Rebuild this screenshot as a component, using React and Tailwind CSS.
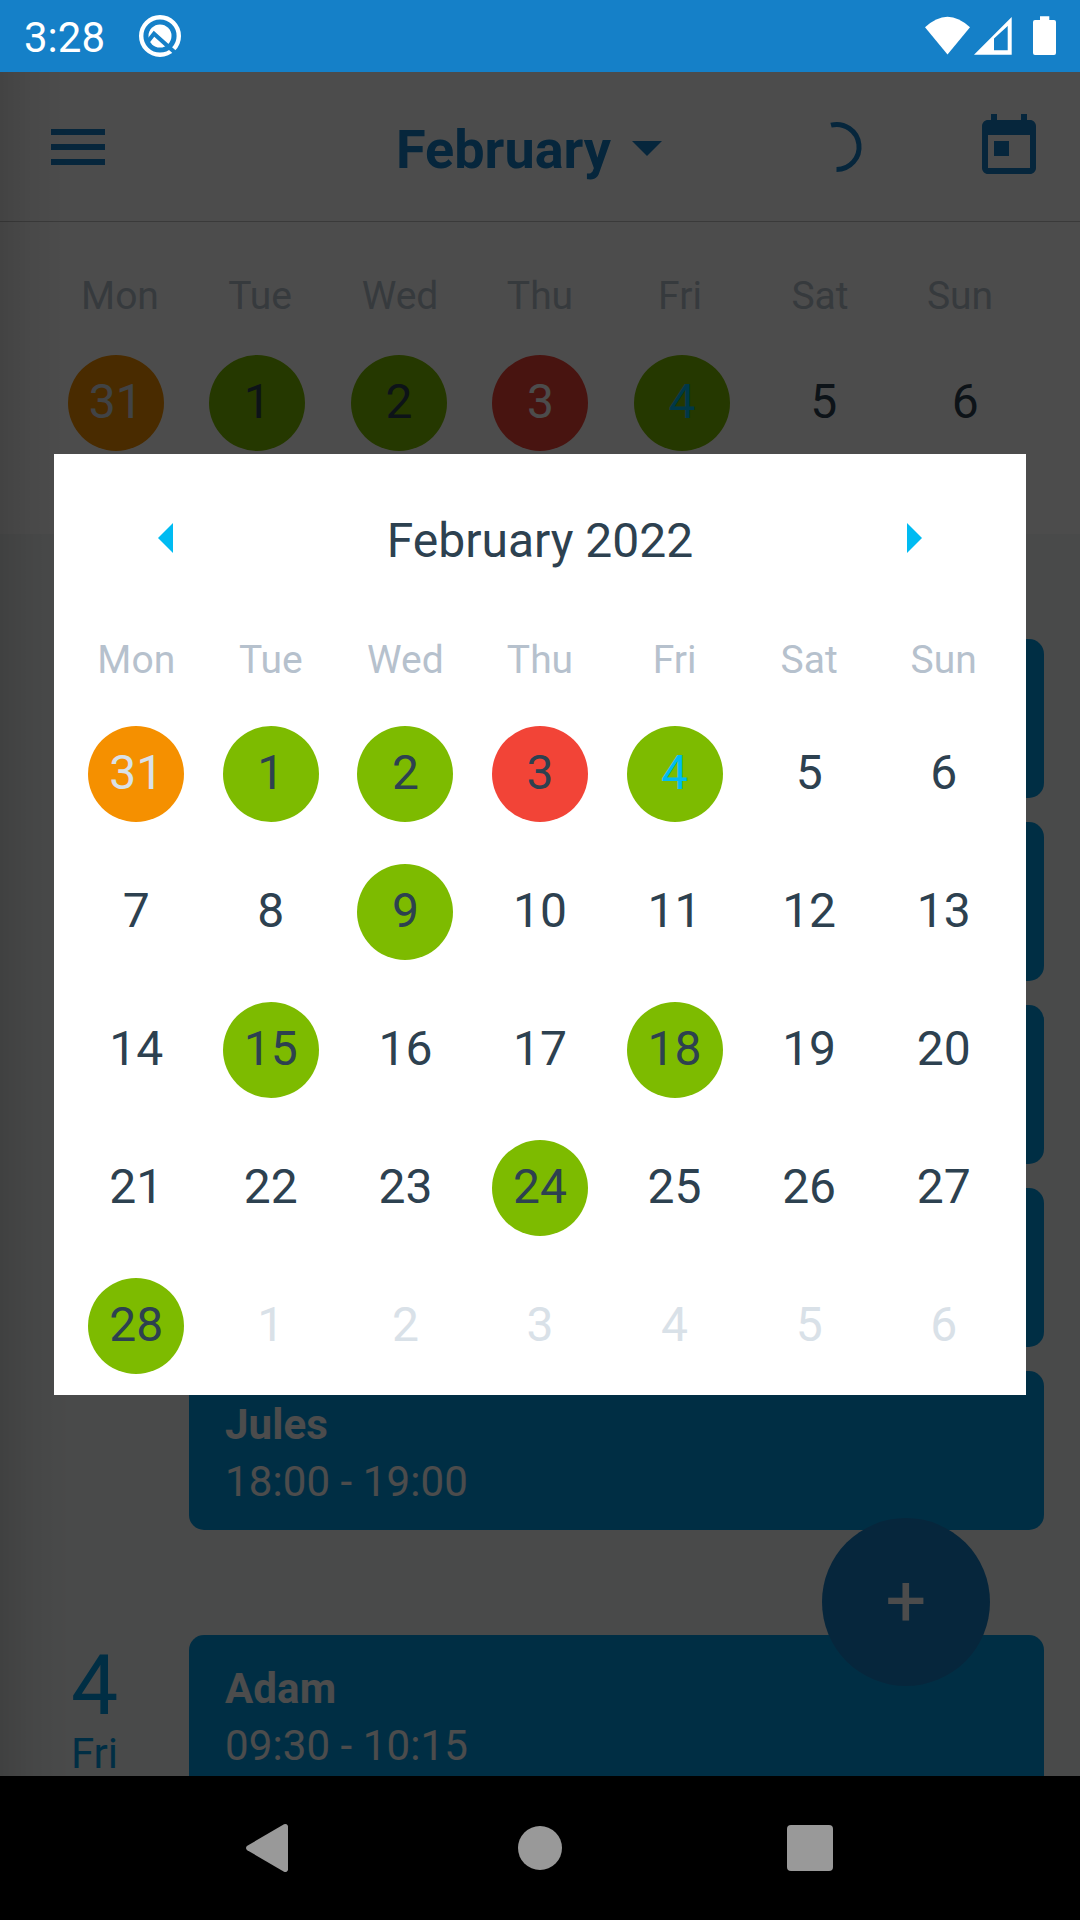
import React from 'react';

const weekDays = ['Mon', 'Tue', 'Wed', 'Thu', 'Fri', 'Sat', 'Sun'];

const markedDays = {
  31: 'orange',
  1: 'green',
  2: 'green',
  3: 'red',
  4: 'green',
  9: 'green',
  15: 'green',
  18: 'green',
  24: 'green',
  28: 'green',
};

const dotColors = {
  orange: 'bg-[#f59000]',
  green: 'bg-[#7dbb00]',
  red: 'bg-[#f24437]',
};

const weekStrip = [
  { day: 31, mark: 'orange', color: 'text-[#d9e1e8]' },
  { day: 1, mark: 'green', color: 'text-[#2d4150]' },
  { day: 2, mark: 'green', color: 'text-[#2d4150]' },
  { day: 3, mark: 'red', color: 'text-white' },
  { day: 4, mark: 'green', color: 'text-[#00bbf2]' },
  { day: 5, color: 'text-[#2d4150]' },
  { day: 6, color: 'text-[#2d4150]' },
];

const monthDays = [
  { day: 31, outside: true, mark: markedDays[31] },
  ...Array.from({ length: 28 }, (_, i) => ({
    day: i + 1,
    mark: markedDays[i + 1],
    today: i + 1 === 4,
  })),
  ...Array.from({ length: 6 }, (_, i) => ({ day: i + 1, outside: true })),
];

const thursdayEvents = [
  { id: 1 },
  { id: 2 },
  { id: 3 },
  { id: 4 },
  { id: 5, name: 'Jules', time: '18:00 - 19:00' },
];

const StatusBar = () => (
  <div className="h-[72px] shrink-0 bg-[#1580c8] flex items-center pl-6 pr-[22px] text-white">
    <span className="text-[42px] leading-none pt-[3px] w-[114px]">3:28</span>
    <svg className="w-11 h-11" viewBox="0 0 44 44" fill="none">
      <circle cx="22" cy="22" r="18.8" stroke="#fff" strokeWidth="4.4" />
      <circle cx="22" cy="22" r="11.5" fill="#fff" />
      <path d="M9.5 28L16 19.800L38 39.500" stroke="#1580c8" strokeWidth="4.2" />
    </svg>
    <div className="flex-1" />
    <svg className="w-[136px] h-11" viewBox="0 0 136 44" fill="#fff">
      <path d="M3 13.300Q25.500 -8 48 13.300L25.500 40.500z" />
      <path fillRule="evenodd" d="M52 40.700L89.700 3v37.700zM72 24.500v11.800h13.700V12z" />
      <path d="M118 2.300h9.300V6h4.700a2 2 0 0 1 2 2v31a2 2 0 0 1-2 2h-19a2 2 0 0 1-2-2V8a2 2 0 0 1 2-2h5z" />
    </svg>
  </div>
);

const Header = () => (
  <div className="h-[150px] shrink-0 bg-white border-b border-[#c4c4c4] flex items-center pl-[42px] pr-[35px] text-[#1580c8]">
    <svg className="w-[72px] h-[72px]" viewBox="0 0 24 24" fill="currentColor">
      <path d="M3 18h18v-2H3v2zm0-5h18v-2H3v2zm0-7v2h18V6H3z" />
    </svg>
    <div className="flex items-center ml-[282px]">
      <span className="w-[215px] text-[54px] font-bold leading-[64px] pt-1.5">February</span>
      <svg className="w-[72px] h-[72px]" viewBox="0 0 24 24" fill="currentColor">
        <path d="M7 10l5 5 5-5z" />
      </svg>
    </div>
    <div className="flex-1 flex items-center justify-end gap-[100px]">
      <svg className="w-[72px] h-[72px]" viewBox="0 0 72 72" fill="none">
        <path d="M30 14.200A22.500 22.500 0 1 1 35.500 58.500" stroke="currentColor" strokeWidth="5" />
      </svg>
      <svg className="w-[72px] h-[72px]" viewBox="0 0 24 24" fill="currentColor">
        <path d="M19 3h-1V1h-2v2H8V1H6v2H5c-1.110 0-1.990.9-1.990 2L3 19c0 1.100.89 2 2 2h14c1.100 0 2-.9 2-2V5c0-1.100-.9-2-2-2zm0 16H5V8h14v11zM7 10h5v5H7z" />
      </svg>
    </div>
  </div>
);

const Day = ({ day, mark, color }) => (
  <div className="flex justify-center">
    <div
      className={`w-24 h-24 rounded-full flex items-center justify-center text-5xl leading-none pb-[3px] ${color} ${mark ? dotColors[mark] : ''}`}
    >
      {day}
    </div>
  </div>
);

const WeekNames = () => (
  <div className="grid grid-cols-7 text-center text-[39px] leading-[46px] text-[#b6c1cd]">
    {weekDays.map((name) => (
      <span key={name}>{name}</span>
    ))}
  </div>
);

const EventCard = ({ name, time }) => (
  <div className="h-[159px] shrink-0 rounded-[15px] bg-[#039be5] text-white pl-9 pt-[25px] text-[42px] leading-[57px] tracking-[0.1px]">
    {name && <div className="font-bold">{name}</div>}
    {time && <div>{time}</div>}
  </div>
);

const Agenda = () => (
  <div className="flex-1 min-h-0 overflow-hidden bg-[#f4f7f7] pt-[105px] pr-9">
    <div className="flex pl-[189px] mb-[105px]">
      <div className="flex-1 flex flex-col gap-6">
        {thursdayEvents.map((event) => (
          <EventCard key={event.id} {...event} />
        ))}
      </div>
    </div>
    <div className="flex">
      <div className="w-[189px] text-center text-[#039be5]">
        <div className="text-[84px] leading-[102px]">4</div>
        <div className="-mt-[5px] text-[42px] leading-[44px]">Fri</div>
      </div>
      <div className="flex-1">
        <EventCard name="Adam" time="09:30 - 10:15" />
      </div>
    </div>
  </div>
);

const CalendarDialog = () => (
  <div className="absolute left-[54px] top-[382px] w-[972px] h-[941px] bg-white px-[15px] pb-[21px] flex flex-col">
    <div className="flex items-center justify-between px-[62px] pt-12">
      <svg className="w-[72px] h-[72px] text-[#00bbf2]" viewBox="0 0 24 24" fill="currentColor">
        <path d="M14 7l-5 5 5 5V7z" />
      </svg>
      <span className="text-5xl leading-[56px] pt-[5px] text-[#2d4150]">February 2022</span>
      <svg className="w-[72px] h-[72px] text-[#00bbf2]" viewBox="0 0 24 24" fill="currentColor">
        <path d="M10 17l5-5-5-5v10z" />
      </svg>
    </div>
    <div className="pt-[63px]">
      <WeekNames />
    </div>
    <div className="mt-auto grid grid-cols-7 gap-y-[42px]">
      {monthDays.map((item, index) => {
        let color = 'text-[#2d4150]';
        if (item.outside) color = 'text-[#d9e1e8]';
        if (item.today) color = 'text-[#00bbf2]';
        return <Day key={index} day={item.day} mark={item.mark} color={color} />;
      })}
    </div>
  </div>
);

const NavBar = () => (
  <div className="h-36 shrink-0 bg-black flex items-center justify-center gap-[198px]">
    <svg className="w-[72px] h-[72px]" viewBox="0 0 72 72" fill="#999">
      <path d="M50 12.300a2.700 2.700 0 0 1 4 2.300v42.800a2.700 2.700 0 0 1-4 2.300L13.300 38.300a2.700 2.700 0 0 1 0-4.600z" />
    </svg>
    <div className="w-[72px] h-[72px] flex items-center justify-center">
      <div className="w-11 h-11 rounded-full bg-[#999]" />
    </div>
    <div className="w-[72px] h-[72px] flex items-center justify-center">
      <div className="w-[46px] h-[46px] rounded-[4px] bg-[#999]" />
    </div>
  </div>
);

const App = () => {
  return (
    <div className="w-[1080px] h-[1920px] overflow-hidden flex flex-col font-['Roboto',sans-serif]">
      <StatusBar />

      <div className="relative flex-1 min-h-0 flex flex-col overflow-hidden">
        <Header />

        {/* Week strip */}
        <div className="h-[312px] shrink-0 bg-white pt-[51px]">
          <div className="px-[50px]">
            <WeekNames />
          </div>
          <div className="grid grid-cols-7 pl-[45px] pr-11 pt-9">
            {weekStrip.map((item) => (
              <Day key={item.day} {...item} />
            ))}
          </div>
        </div>

        <Agenda />

        {/* Add button */}
        <div className="absolute right-[90px] bottom-[90px] w-[168px] h-[168px] rounded-full bg-[#1580c8] text-white text-[72px] leading-none flex items-center justify-center pb-[3px]">
          +
        </div>

        {/* Drawer edge shadow */}
        <div className="absolute left-0 top-0 bottom-0 w-[68px] bg-gradient-to-r from-black/12 via-black/4 to-transparent" />

        {/* Backdrop */}
        <div className="absolute inset-0 bg-black/70" />

        <CalendarDialog />
      </div>

      <NavBar />
    </div>
  );
};

export default App;
